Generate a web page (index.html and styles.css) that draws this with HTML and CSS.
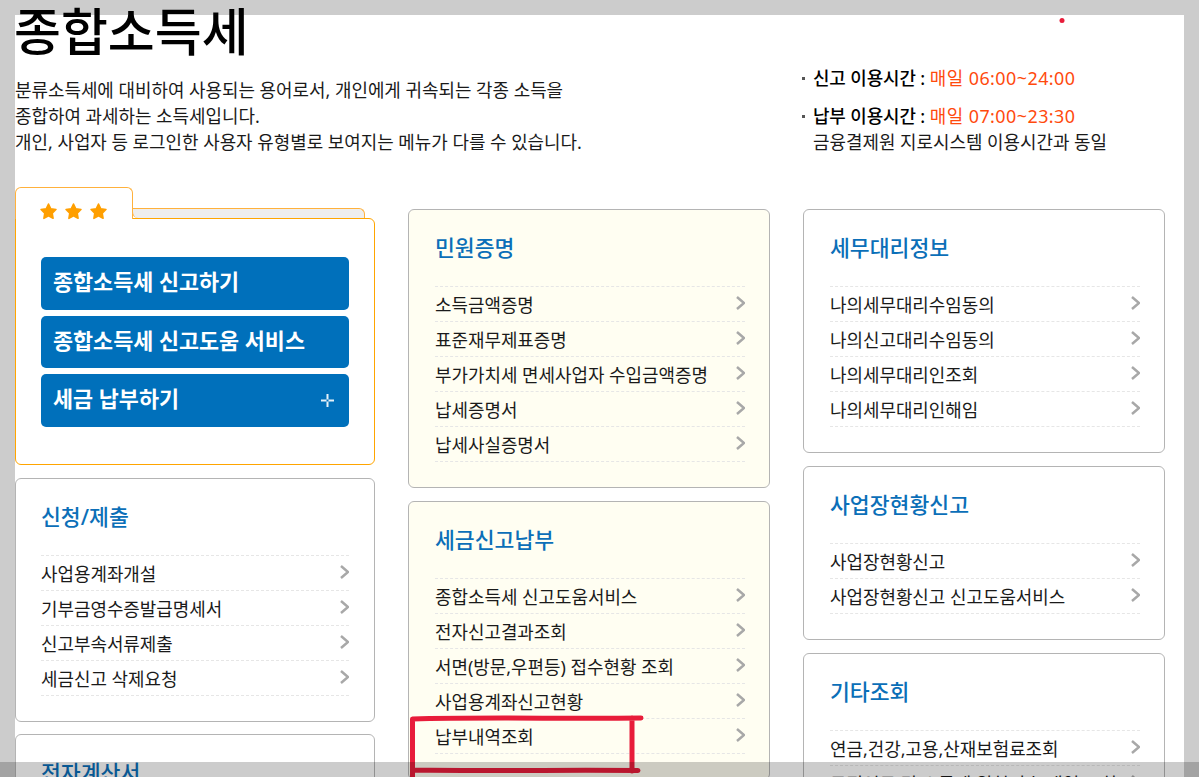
FILE: index.html
```html
<!DOCTYPE html>
<html lang="ko">
<head>
<meta charset="utf-8">
<title>종합소득세</title>
<link rel="stylesheet" href="styles.css">
</head>
<body>
<div class="page">
  <header class="intro">
    <div class="intro-text">
      <h1 class="title">종합소득세</h1>
      <p class="desc">분류소득세에 대비하여 사용되는 용어로서, 개인에게 귀속되는 각종 소득을<br>종합하여 과세하는 소득세입니다.<br>개인, 사업자 등 로그인한 사용자 유형별로 보여지는 메뉴가 다를 수 있습니다.</p>
    </div>
    <ul class="hours">
      <li class="hours-item"><b>신고 이용시간 :</b> <em>매일 06:00~24:00</em></li>
      <li class="hours-item"><b>납부 이용시간 :</b> <em>매일 07:00~23:30</em><br>금융결제원 지로시스템 이용시간과 동일</li>
    </ul>
  </header>
  <main class="columns">
    <section class="col col-first">
      <div class="fav">
        <div class="fav-tabs">
          <div class="fav-tab">
            <svg class="star" viewBox="0 0 24 24"><path d="M12 2.600l2.900 5.900 6.500 1-4.700 4.600 1.100 6.500-5.800-3.100-5.800 3.100 1.100-6.500L2.600 9.500l6.500-1z"/></svg>
            <svg class="star" viewBox="0 0 24 24"><path d="M12 2.600l2.900 5.900 6.500 1-4.700 4.600 1.100 6.500-5.800-3.100-5.800 3.100 1.100-6.500L2.600 9.500l6.500-1z"/></svg>
            <svg class="star" viewBox="0 0 24 24"><path d="M12 2.600l2.900 5.900 6.500 1-4.700 4.600 1.100 6.500-5.800-3.100-5.800 3.100 1.100-6.500L2.600 9.500l6.500-1z"/></svg>
          </div>
          <div class="fav-back"></div>
        </div>
        <div class="fav-body">
          <a class="btn">종합소득세 신고하기</a>
          <a class="btn">종합소득세 신고도움 서비스</a>
          <a class="btn">세금 납부하기<svg class="plus" viewBox="0 0 13 13"><path d="M6.500 0v5.500M6.500 7.500v5.500M0 6.500h5.500M7.500 6.500h5.500"/></svg></a>
        </div>
      </div>
      <div class="card">
        <h2 class="card-title">신청/제출</h2>
        <ul class="menu">
          <li class="menu-item">사업용계좌개설<svg class="chev" viewBox="0 0 10 14"><path d="M2 1l7 6-7 6"/></svg></li>
          <li class="menu-item">기부금영수증발급명세서<svg class="chev" viewBox="0 0 10 14"><path d="M2 1l7 6-7 6"/></svg></li>
          <li class="menu-item">신고부속서류제출<svg class="chev" viewBox="0 0 10 14"><path d="M2 1l7 6-7 6"/></svg></li>
          <li class="menu-item">세금신고 삭제요청<svg class="chev" viewBox="0 0 10 14"><path d="M2 1l7 6-7 6"/></svg></li>
        </ul>
      </div>
      <div class="card">
        <h2 class="card-title">전자계산서</h2>
      </div>
    </section>
    <section class="col">
      <div class="card card-tint">
        <h2 class="card-title">민원증명</h2>
        <ul class="menu">
          <li class="menu-item">소득금액증명<svg class="chev" viewBox="0 0 10 14"><path d="M2 1l7 6-7 6"/></svg></li>
          <li class="menu-item">표준재무제표증명<svg class="chev" viewBox="0 0 10 14"><path d="M2 1l7 6-7 6"/></svg></li>
          <li class="menu-item">부가가치세 면세사업자 수입금액증명<svg class="chev" viewBox="0 0 10 14"><path d="M2 1l7 6-7 6"/></svg></li>
          <li class="menu-item">납세증명서<svg class="chev" viewBox="0 0 10 14"><path d="M2 1l7 6-7 6"/></svg></li>
          <li class="menu-item">납세사실증명서<svg class="chev" viewBox="0 0 10 14"><path d="M2 1l7 6-7 6"/></svg></li>
        </ul>
      </div>
      <div class="card card-tint">
        <h2 class="card-title">세금신고납부</h2>
        <ul class="menu">
          <li class="menu-item">종합소득세 신고도움서비스<svg class="chev" viewBox="0 0 10 14"><path d="M2 1l7 6-7 6"/></svg></li>
          <li class="menu-item">전자신고결과조회<svg class="chev" viewBox="0 0 10 14"><path d="M2 1l7 6-7 6"/></svg></li>
          <li class="menu-item">서면(방문,우편등) 접수현황 조회<svg class="chev" viewBox="0 0 10 14"><path d="M2 1l7 6-7 6"/></svg></li>
          <li class="menu-item">사업용계좌신고현황<svg class="chev" viewBox="0 0 10 14"><path d="M2 1l7 6-7 6"/></svg></li>
          <li class="menu-item">납부내역조회<svg class="chev" viewBox="0 0 10 14"><path d="M2 1l7 6-7 6"/></svg></li>
        </ul>
      </div>
    </section>
    <section class="col">
      <div class="card">
        <h2 class="card-title">세무대리정보</h2>
        <ul class="menu">
          <li class="menu-item">나의세무대리수임동의<svg class="chev" viewBox="0 0 10 14"><path d="M2 1l7 6-7 6"/></svg></li>
          <li class="menu-item">나의신고대리수임동의<svg class="chev" viewBox="0 0 10 14"><path d="M2 1l7 6-7 6"/></svg></li>
          <li class="menu-item">나의세무대리인조회<svg class="chev" viewBox="0 0 10 14"><path d="M2 1l7 6-7 6"/></svg></li>
          <li class="menu-item">나의세무대리인해임<svg class="chev" viewBox="0 0 10 14"><path d="M2 1l7 6-7 6"/></svg></li>
        </ul>
      </div>
      <div class="card">
        <h2 class="card-title">사업장현황신고</h2>
        <ul class="menu">
          <li class="menu-item">사업장현황신고<svg class="chev" viewBox="0 0 10 14"><path d="M2 1l7 6-7 6"/></svg></li>
          <li class="menu-item">사업장현황신고 신고도움서비스<svg class="chev" viewBox="0 0 10 14"><path d="M2 1l7 6-7 6"/></svg></li>
        </ul>
      </div>
      <div class="card">
        <h2 class="card-title">기타조회</h2>
        <ul class="menu">
          <li class="menu-item">연금,건강,고용,산재보험료조회<svg class="chev" viewBox="0 0 10 14"><path d="M2 1l7 6-7 6"/></svg></li>
          <li class="menu-item">공적연금 및 소득세 원천징수 내역 조회<svg class="chev" viewBox="0 0 10 14"><path d="M2 1l7 6-7 6"/></svg></li>
        </ul>
      </div>
    </section>
  </main>
</div>
<svg class="ink" viewBox="0 0 1199 777" width="1199" height="777">
  <circle class="ink-dot" cx="1062" cy="20.500" r="2.500"/>
  <path class="ink-line" d="M412.500 777L412.500 719C480 717 570 719 641 718M632 718L632 771M414 770C480 771 570 770 638 770.500"/>
</svg>
<div class="scrim"></div>
</body>
</html>
```
FILE: styles.css
```css
* { box-sizing: border-box; }
html, body { height: 100%; }
body {
  margin: 0;
  background: #cccccc;
  overflow: hidden;
  color: #111;
  font-family: "Noto Sans", "Noto Sans CJK KR", sans-serif;
}
ul { list-style: none; margin: 0; padding: 0; }
.page {
  margin: 15px 15px 0;
  background: #fff;
  min-height: 900px;
}
.intro { display: flex; height: 172px; }
.intro-text { width: 786px; }
.title {
  margin: 0 0 0 -1px;
  height: 40px;
  font-size: 51px;
  line-height: 32px;
  font-weight: 500;
  color: #000;
}
.desc {
  margin: 22px 0 0;
  font-size: 17.920px;
  line-height: 26px;
  color: #1a1a1a;
}
.hours { padding-top: 50px; }
.hours-item {
  position: relative;
  padding-left: 12px;
  font-size: 17.920px;
  line-height: 26px;
  margin-bottom: 12px;
  color: #1a1a1a;
}
.hours-item::before {
  content: "";
  position: absolute;
  left: 1px;
  top: 12px;
  width: 3px;
  height: 3px;
  background: #555;
}
.hours-item b { font-weight: 500; color: #000; letter-spacing: -0.1px; }
.hours-item em { font-style: normal; color: #ff4a0d; letter-spacing: 0.45px; }
.columns { display: flex; gap: 33px; }
.col { flex: 0 0 362px; display: flex; flex-direction: column; gap: 13px; padding-top: 22px; }
.col-first { flex-basis: 360px; padding-top: 0; gap: 12px; }
.fav { margin-bottom: 1px; }
.fav-tabs { display: flex; align-items: flex-end; height: 32px; position: relative; z-index: 1; }
.fav-tab {
  width: 118px;
  height: 32px;
  background: #fff;
  border: 1px solid #ffb13c;
  border-bottom: 0;
  border-radius: 6px 6px 0 0;
  display: flex;
  gap: 6px;
  padding: 14px 0 0 23px;
}
.star { width: 19px; height: 19px; fill: #ff9f00; stroke: #ff9f00; stroke-width: 2; stroke-linejoin: round; }
.fav-back {
  width: 233px;
  height: 10px;
  margin-left: -1px;
  margin-bottom: 1px;
  background: #eeeeee;
  border: 1px solid #ffb13c;
  border-bottom: 0;
  border-radius: 0 6px 0 6px;
}
.fav-body {
  margin-top: -1px;
  height: 247px;
  border: 1px solid #ffa500;
  border-radius: 0 6px 6px 6px;
  padding: 38px 25px 0;
  display: flex;
  flex-direction: column;
  gap: 6px;
}
.btn {
  height: 52.500px;
  display: flex;
  align-items: center;
  justify-content: space-between;
  padding: 0 15px 5px 12px;
  background: #0070bb;
  border-radius: 5px;
  color: #fff;
  font-size: 21.800px;
  font-weight: 700;
}
.plus { width: 13px; height: 13px; margin-top: 5px; stroke: #e6f1f9; stroke-width: 2; fill: none; }
.card {
  border: 1px solid #b4b4b4;
  border-radius: 6px;
  background: #fff;
  padding: 0 24px 25px 26px;
}
.col-first .card { padding: 0 25px 25px; }
.card-tint { background: #fffef2; }
.card-title {
  margin: 0;
  height: 76px;
  line-height: 75px;
  font-size: 21.600px;
  font-weight: 500;
  color: #0b6fb8;
}
.menu { border-top: 1px dashed #e6e6e6; }
.menu-item {
  height: 35px;
  border-bottom: 1px dashed #e6e6e6;
  display: flex;
  align-items: center;
  justify-content: space-between;
  padding-bottom: 1px;
  font-size: 17.920px;
  color: #1a1a1a;
}
.chev { width: 10px; height: 14px; fill: none; stroke: #a8a8a8; stroke-width: 2.500; margin-top: -1px; }
.ink { position: fixed; left: 0; top: 0; pointer-events: none; }
.ink-dot { fill: #e81c3a; }
.ink-line { fill: none; stroke: #e81c3a; stroke-width: 5; stroke-linecap: round; stroke-linejoin: round; }
.scrim {
  position: fixed;
  left: 0;
  right: 0;
  top: 762px;
  bottom: 0;
  background: rgba(0, 0, 0, 0.2);
}
```
